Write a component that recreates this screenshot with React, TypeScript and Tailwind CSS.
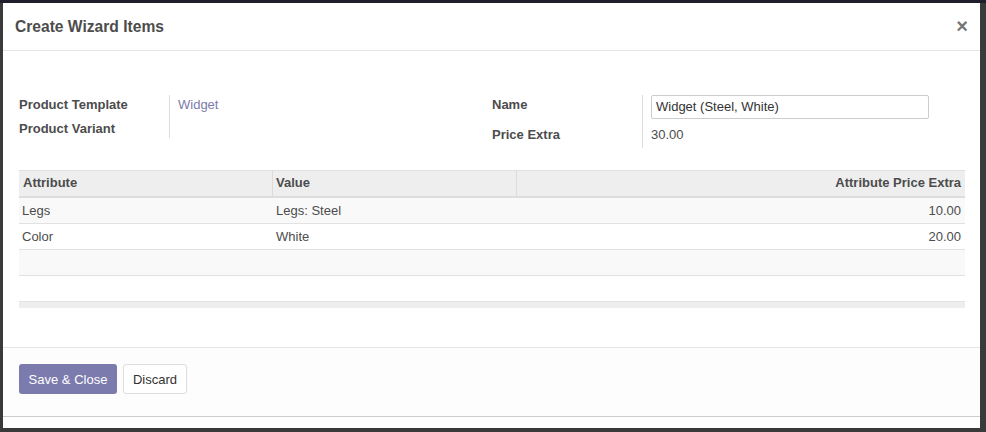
import React from "react";

export default function App() {
  return (
    <div
      className="w-[986px] h-[432px] bg-[#3a3a3a] relative overflow-hidden"
      style={{ fontFamily: '"Liberation Sans", Arial, sans-serif' }}
    >
      <div className="h-[3px] bg-[#1e1e2c]" />
      <div className="ml-[3px] w-[977px] h-[425px] bg-white flex flex-col text-[13px] text-[#4c4c4c]">
        {/* Header */}
        <div className="h-[48px] border-b border-[#e5e5e5] flex items-center justify-between pl-[12px] pr-[12px] shrink-0">
          <div className="text-[15.6px] font-bold text-[#4c4c4c] pt-[1px]">Create Wizard Items</div>
          <div className="text-[#777] text-[20px] font-bold leading-none pb-[2px]">×</div>
        </div>
        {/* Body */}
        <div className="h-[297px] border-b border-[#e5e5e5] pl-[16px] pr-[15px] pt-[44px] shrink-0">
          <div className="flex">
            {/* left group */}
            <div className="w-[473px] flex">
              <div className="w-[150px] flex flex-col">
                <div className="h-[20px] flex items-center font-bold">Product Template</div>
                <div className="h-[24px] flex items-center font-bold pt-[4px]">Product Variant</div>
              </div>
              <div className="border-l border-[#ddd] h-[43px] pl-[8px]">
                <div className="h-[20px] flex items-center text-[#7c7bad]">Widget</div>
              </div>
            </div>
            {/* right group */}
            <div className="flex">
              <div className="w-[150px] flex flex-col">
                <div className="h-[20px] flex items-center font-bold">Name</div>
                <div className="h-[30px] flex items-center font-bold pt-[9px]">Price Extra</div>
              </div>
              <div className="border-l border-[#ddd] h-[53px] pl-[8px]">
                <div className="w-[278px] h-[24px] border border-[#ccc] rounded-[2px] flex items-center px-[4px] text-[#333]">
                  Widget (Steel, White)
                </div>
                <div className="h-[30px] flex items-center text-[#4c4c4c] pt-[2px]">30.00</div>
              </div>
            </div>
          </div>
          {/* table */}
          <div className="mt-[22px] w-[946px]">
            <div className="flex h-[28px] bg-[#eeeeee] border-t border-[#e0e0e0] border-b-[2px] border-b-[#dddddd] font-bold">
              <div className="w-[254px] flex items-center pl-[4px] pb-[2px] border-r border-[#dcdcdc]">Attribute</div>
              <div className="w-[244px] flex items-center pl-[3px] pb-[2px] border-r border-[#dcdcdc]">Value</div>
              <div className="flex-1 flex items-center justify-end pr-[4px] pb-[2px]">Attribute Price Extra</div>
            </div>
            <div className="flex h-[26px] bg-[#f9f9f9] border-b border-[#e2e2e2]">
              <div className="w-[254px] flex items-center pl-[3px]">Legs</div>
              <div className="w-[244px] flex items-center pl-[3px]">Legs: Steel</div>
              <div className="flex-1 flex items-center justify-end pr-[4px]">10.00</div>
            </div>
            <div className="flex h-[26px] bg-white border-b border-[#e2e2e2]">
              <div className="w-[254px] flex items-center pl-[3px]">Color</div>
              <div className="w-[244px] flex items-center pl-[3px]">White</div>
              <div className="flex-1 flex items-center justify-end pr-[4px]">20.00</div>
            </div>
            <div className="h-[26px] bg-[#f9f9f9] border-b border-[#e2e2e2]" />
            <div className="h-[26px] bg-white border-b border-[#e2e2e2]" />
            <div className="h-[6px] bg-[#eeeeee]" />
          </div>
        </div>
        {/* Footer */}
        <div className="h-[69px] bg-[#fdfdfd] border-b border-[#cccccc] pl-[16px] pt-[16px] flex items-start gap-[6px] shrink-0">
          <div className="h-[30px] w-[98px] pt-[1px] bg-[#7c7bad] text-white rounded-[3px] flex items-center justify-center text-[13px]">
            Save &amp; Close
          </div>
          <div className="h-[30px] w-[64px] pt-[1px] bg-white border border-[#dddddd] text-[#333] rounded-[3px] flex items-center justify-center text-[13px]">
            Discard
          </div>
        </div>
        <div className="flex-1 bg-white" />
      </div>
    </div>
  );
}
